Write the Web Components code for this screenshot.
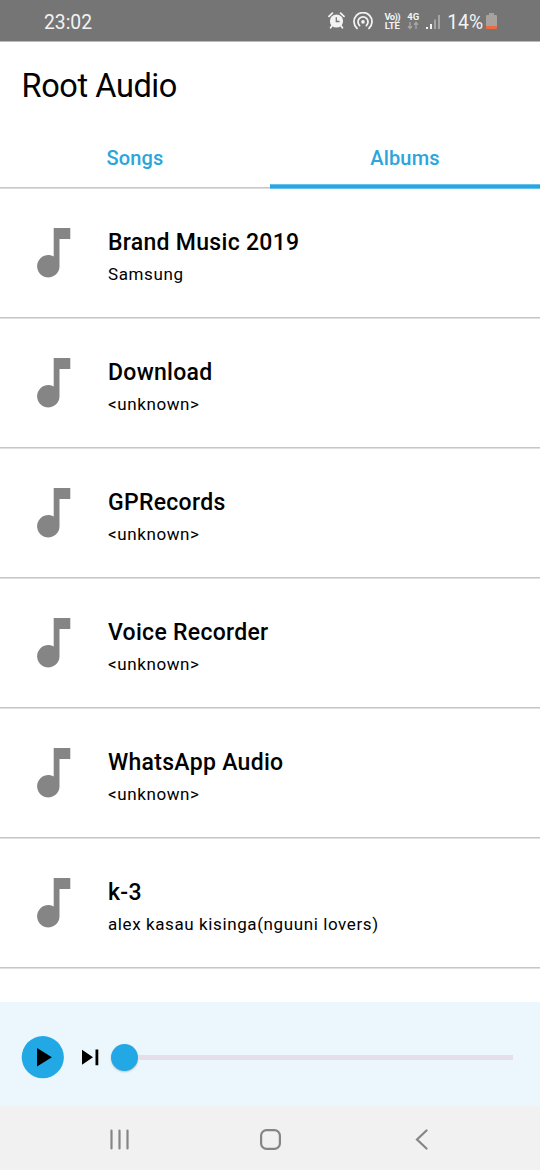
<!DOCTYPE html>
<html lang="en">
<head>
<meta charset="utf-8">
<title>Root Audio</title>
<style>
html,body{margin:0;height:100%;background:#fff}
body{font-family:Roboto,"Liberation Sans",sans-serif;color:#000;overflow:hidden}
</style>
</head>
<body>
<root-app></root-app>
<script>
const define = (name, html) => customElements.define(name, class extends HTMLElement {
  constructor() {
    super();
    this.attachShadow({ mode: 'open' }).innerHTML = html;
  }
});

define('status-bar', `
<style>
:host{display:flex;height:42px;box-sizing:border-box;background:#757575;border-bottom:1px solid #b9b9b9;color:#f3f3f3;align-items:center;justify-content:space-between;padding:2px 43px 0 44px}
time{font-size:19.3px;line-height:22px;padding-top:2px}
.icons{display:flex;align-items:center}
svg{display:block;flex:none}
.volte,.net{display:flex;flex-direction:column;align-items:center;font-weight:700;font-size:9.5px;line-height:9px}
.volte{width:16px;margin-left:10px;margin-bottom:1px;white-space:nowrap;letter-spacing:-.2px}
.volte span:first-child{letter-spacing:-.6px}
.net{width:14px;margin-left:6px;margin-bottom:1px}
.pct{font-size:19.3px;line-height:22px;margin-left:6px;margin-right:1px;letter-spacing:0;padding-top:2px}
</style>
<time>23:02</time>
<div class="icons">
  <svg style="margin-bottom:2px" width="17" height="17" viewBox="0 0 17 17" fill="none"><circle cx="8.5" cy="9" r="6.6" fill="#f3f3f3"/><path d="M1 4.3 4.4 1.2M16 4.3 12.6 1.2M4.2 13.5l-1.6 2.2M12.8 13.5l1.6 2.2" stroke="#f3f3f3" stroke-width="1.8" stroke-linecap="round"/><path d="M8.3 5.2v4.3h3.2" stroke="#757575" stroke-width="1.3"/></svg>
  <svg style="margin:0 1px 2px 8px" width="20" height="18" viewBox="0 0 20 18" fill="none" stroke="#f3f3f3" stroke-width="1.8" stroke-linecap="round"><path d="M4 16.3a9 9 0 1 1 12 0"/><path d="M6.6 13.6a5 5 0 1 1 6.8 0"/><circle cx="10" cy="9.9" r="1.8" fill="#f3f3f3" stroke="none"/></svg>
  <div class="volte"><span>Vo))</span><span>LTE</span></div>
  <div class="net"><span>4G</span><svg width="12" height="9" viewBox="0 0 12 9" fill="none" stroke="#a9a9a9" stroke-width="1.3"><path d="M3 1v6.5M1 5.3l2 2.2 2-2.2M9 8V1.5M7 3.7l2-2.2 2 2.2"/></svg></div>
  <svg style="margin-left:6px" width="15" height="16" viewBox="0 0 15 16"><path d="M0 13h2v2H0zM4 10h2v5H4z" fill="#f3f3f3"/><path d="M8 5.5h2V15H8zM12 1h2v14h-2z" fill="#a5a5a5"/></svg>
  <span class="pct">14%</span>
  <svg style="margin-left:2px" width="11" height="17" viewBox="0 0 11 17"><path d="M3 0h5v2h2a1 1 0 0 1 1 1v10H0V3a1 1 0 0 1 1-1h2z" fill="#a8a29f"/><path d="M0 13h11v2a1 1 0 0 1-1 1H1a1 1 0 0 1-1-1z" fill="#ea6c45"/></svg>
</div>`);

define('app-title', `
<style>:host{display:flex;align-items:center;height:87px;padding-left:21.5px;font-size:32.5px;letter-spacing:-.4px;box-sizing:border-box;padding-top:1px}</style>
<slot></slot>`);

define('tab-bar', `
<style>:host{display:grid;grid-template-columns:1fr 1fr;height:60px}</style>
<slot></slot>`);

define('tab-item', `
<style>
:host{display:flex;flex-direction:column;justify-content:space-between;align-items:center;color:#2ba5dc;font-size:20px;font-weight:500;letter-spacing:.2px}
span{line-height:24px;padding-top:17px}
i{display:block;align-self:stretch;height:1px;border-bottom:1px solid #dcdcde;background:#c8c7cb}
:host([selected]) i{height:3px;background:#26a7e2;border-top:1px solid #68c1ea;border-bottom-color:#68c1ea}
</style>
<span><slot></slot></span><i></i>`);

define('album-row', `
<style>
:host{display:flex;box-sizing:border-box;height:130px;padding:39px 20px 0 37px;background:linear-gradient(#c6c5ca,#c6c5ca) 0 128px/100% 1px no-repeat,linear-gradient(#e0dfe2,#e0dfe2) 0 129px/100% 1px no-repeat}
svg{display:block;flex:none;margin-right:37px}
.name{font-size:23px;line-height:28px;font-weight:500;letter-spacing:.29px;padding-top:1px}
.artist{font-size:17px;line-height:24px;margin-top:5px;letter-spacing:.6px}
</style>
<svg width="34" height="50" viewBox="0 0 34 50" fill="#858585"><path d="M16.7 0H33.3V11H22.5V38.2A11.2 11.2 0 1 1 16.7 28.4z"/></svg>
<div><div class="name"><slot></slot></div><div class="artist"><slot name="artist"></slot></div></div>`);

define('player-bar', `
<style>
:host{display:flex;align-items:center;box-sizing:border-box;height:104px;background:#ebf7fc;padding:6px 27px 0 21px}
.play{width:43px;height:43px;flex:none}
.next{margin-left:18px;flex:none}
svg{display:block}
.seek{flex:1;display:flex;align-items:center;margin-left:12px;padding-top:1px}
.thumb{width:27px;height:27px;border-radius:50%;background:#23a8e6;box-shadow:0 1px 2px #0003;flex:none}
.track{height:5px;flex:1;background:#e5dfeb}
</style>
<div class="play"><svg width="43" height="43" viewBox="0 0 43 43"><circle cx="21.8" cy="21.2" r="21.1" fill="#23a8e6"/><path d="M16 12v18.4L30.9 21.2z"/></svg></div>
<svg class="next" width="17" height="17" viewBox="0 0 17 17"><path d="M0 .8v15l11-7.5zM13.5.5h2.8v15.8h-2.8z"/></svg>
<div class="seek"><div class="thumb"></div><div class="track"></div></div>`);

define('nav-bar', `
<style>
:host{display:grid;grid-template-columns:80px 80px 80px;justify-content:center;column-gap:71px;height:64px;background:#f1f1f1;align-items:center;justify-items:center;padding:3px 0 0 1px;box-sizing:border-box}
svg{display:block;fill:none;stroke:#858585;stroke-width:2.2;stroke-linecap:round}
</style>
<svg width="20" height="22" viewBox="0.5 0.5 20 22"><path d="M2 2v18M10 2v18M18 2v18"/></svg>
<svg width="22" height="22" viewBox="0.5 0.5 22 22"><rect x="1.6" y="1.6" width="18.8" height="18.8" rx="5.5"/></svg>
<svg width="22" height="22" viewBox="0.5 0.5 22 22"><path d="M16 2 6.5 11 16 20"/></svg>`);

define('root-app', `
<style>
:host{display:flex;flex-direction:column;width:540px;height:1170px;background:#fff}
.list{flex:1;min-height:0}
</style>
<status-bar></status-bar>
<app-title>Root Audio</app-title>
<tab-bar><tab-item>Songs</tab-item><tab-item selected>Albums</tab-item></tab-bar>
<div class="list">
<album-row>Brand Music 2019<span slot="artist">Samsung</span></album-row>
<album-row>Download<span slot="artist">&lt;unknown&gt;</span></album-row>
<album-row>GPRecords<span slot="artist">&lt;unknown&gt;</span></album-row>
<album-row>Voice Recorder<span slot="artist">&lt;unknown&gt;</span></album-row>
<album-row>WhatsApp Audio<span slot="artist">&lt;unknown&gt;</span></album-row>
<album-row>k-3<span slot="artist">alex kasau kisinga(nguuni lovers)</span></album-row>
</div>
<player-bar></player-bar>
<nav-bar></nav-bar>`);
</script>
</body>
</html>
